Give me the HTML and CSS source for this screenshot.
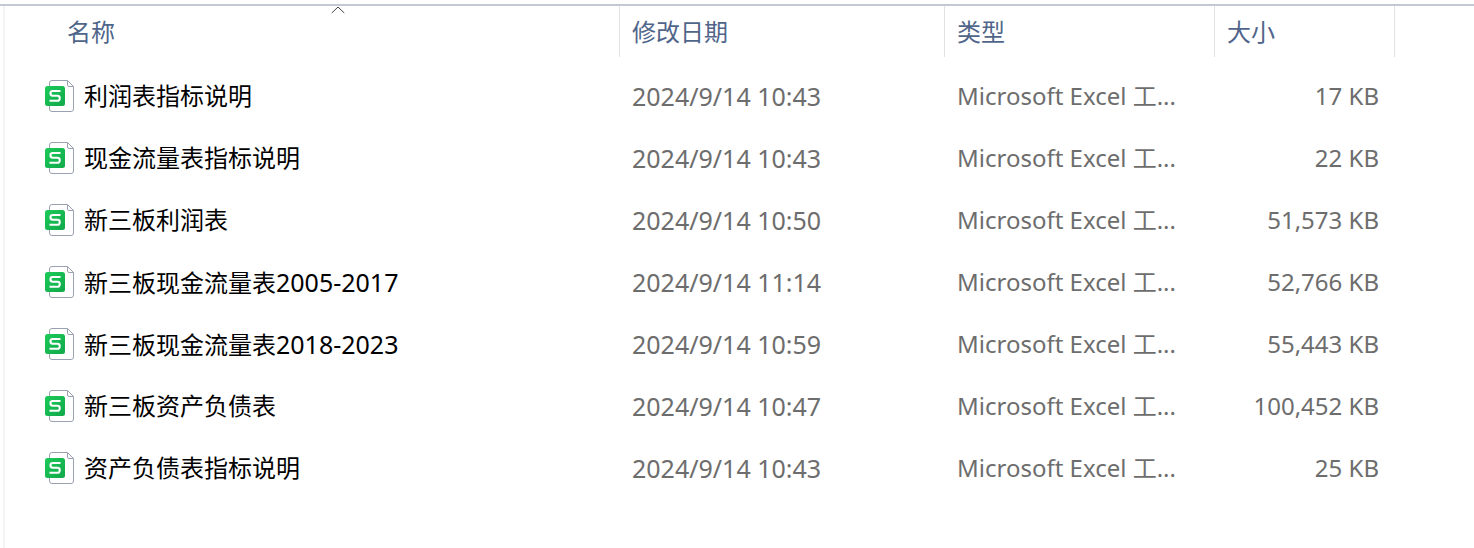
FILE: index.html
```html
<!DOCTYPE html>
<html lang="zh-CN">
<head>
  <meta charset="UTF-8">
  <title>文件列表</title>
  <link rel="stylesheet" href="styles.css">
</head>
<body>
  <!-- 文件图标 -->
  <svg class="sprite" width="0" height="0" aria-hidden="true">
    <defs>
      <linearGradient id="green" x1="0" y1="0" x2="1" y2="1">
        <stop offset="0" stop-color="#1bcb58"/>
        <stop offset="1" stop-color="#12a84b"/>
      </linearGradient>
      <symbol id="sheet" viewBox="0 0 30 32">
        <path d="M7 .5H22.500L28.500 6.500V29a2.500 2.500 0 0 1-2.500 2.500H7A2.500 2.500 0 0 1 4.500 29V3A2.500 2.500 0 0 1 7 .5Z" fill="#fff" stroke="#9aa1b0"/>
        <path d="M22.500 .5V5a1.500 1.500 0 0 0 1.500 1.500H28.500" fill="none" stroke="#9aa1b0"/>
        <rect x="0" y="6" width="20" height="20" rx="2.500" fill="url(#green)"/>
        <path d="M15.500 11H7.700a2.200 2.200 0 0 0-2.200 2.200v.4a2.200 2.200 0 0 0 2.200 2.200H12.500a2.200 2.200 0 0 1 2.200 2.200v.6a2.200 2.200 0 0 1-2.200 2.200H4.500" fill="none" stroke="#fff" stroke-width="2.100"/>
      </symbol>
    </defs>
  </svg>

  <main class="explorer">
    <table class="files">
      <colgroup>
        <col class="col-name">
        <col class="col-date">
        <col class="col-type">
        <col class="col-size">
        <col>
      </colgroup>
      <thead>
        <tr>
          <th class="name-head" aria-sort="ascending">
            <button type="button">名称
              <svg class="sort" width="14" height="8" viewBox="0 0 14 8" aria-hidden="true"><path d="M.7 7L7 1L13.300 7" fill="none" stroke="#444"/></svg>
            </button>
          </th>
          <th><button type="button">修改日期</button></th>
          <th><button type="button">类型</button></th>
          <th><button type="button">大小</button></th>
          <td></td>
        </tr>
      </thead>
      <tbody>
        <tr>
          <td class="name"><div class="file"><svg class="icon"><use href="#sheet"/></svg><span>利润表指标说明</span></div></td>
          <td class="date">2024/9/14 10:43</td>
          <td>Microsoft Excel 工...</td>
          <td class="size">17 KB</td>
          <td></td>
        </tr>
        <tr>
          <td class="name"><div class="file"><svg class="icon"><use href="#sheet"/></svg><span>现金流量表指标说明</span></div></td>
          <td class="date">2024/9/14 10:43</td>
          <td>Microsoft Excel 工...</td>
          <td class="size">22 KB</td>
          <td></td>
        </tr>
        <tr>
          <td class="name"><div class="file"><svg class="icon"><use href="#sheet"/></svg><span>新三板利润表</span></div></td>
          <td class="date">2024/9/14 10:50</td>
          <td>Microsoft Excel 工...</td>
          <td class="size">51,573 KB</td>
          <td></td>
        </tr>
        <tr>
          <td class="name"><div class="file"><svg class="icon"><use href="#sheet"/></svg><span>新三板现金流量表<span class="years">2005-2017</span></span></div></td>
          <td class="date">2024/9/14 11:14</td>
          <td>Microsoft Excel 工...</td>
          <td class="size">52,766 KB</td>
          <td></td>
        </tr>
        <tr>
          <td class="name"><div class="file"><svg class="icon"><use href="#sheet"/></svg><span>新三板现金流量表<span class="years">2018-2023</span></span></div></td>
          <td class="date">2024/9/14 10:59</td>
          <td>Microsoft Excel 工...</td>
          <td class="size">55,443 KB</td>
          <td></td>
        </tr>
        <tr>
          <td class="name"><div class="file"><svg class="icon"><use href="#sheet"/></svg><span>新三板资产负债表</span></div></td>
          <td class="date">2024/9/14 10:47</td>
          <td>Microsoft Excel 工...</td>
          <td class="size">100,452 KB</td>
          <td></td>
        </tr>
        <tr>
          <td class="name"><div class="file"><svg class="icon"><use href="#sheet"/></svg><span>资产负债表指标说明</span></div></td>
          <td class="date">2024/9/14 10:43</td>
          <td>Microsoft Excel 工...</td>
          <td class="size">25 KB</td>
          <td></td>
        </tr>
      </tbody>
    </table>
  </main>
</body>
</html>
```
FILE: styles.css
```css
* {
  box-sizing: border-box;
}

body {
  margin: 0;
  padding-top: 4px;
  background-color: #fff;
  font-family: "Noto Sans", "Noto Sans CJK SC", sans-serif;
  font-size: 24px;
  line-height: 32px;
}

.sprite {
  position: absolute;
}

.explorer {
  min-height: calc(100vh - 4px);
  border-top: 2px solid #c2c9d1;
  padding-left: 3px;
  background: linear-gradient(#f5f5f5, #f5f5f5) 3px 0 / 2px 100% no-repeat;
}

.files {
  width: 100%;
  border-collapse: collapse;
  table-layout: fixed;
}

.col-name {
  width: 617px;
}

.col-date {
  width: 325px;
}

.col-type {
  width: 270px;
}

.col-size {
  width: 180px;
}

th,
td {
  padding: 0;
  text-align: left;
  white-space: nowrap;
}

th {
  padding-bottom: 8px;
  font-weight: 400;
}

.name-head {
  padding-left: 52px;
}

th button {
  display: block;
  position: relative;
  width: 100%;
  height: 51px;
  padding: 0 12px;
  border: none;
  border-right: 1px solid #e2e2e2;
  background: none;
  color: #50658a;
  font: inherit;
  text-align: left;
  cursor: pointer;
}

.sort {
  position: absolute;
  top: 0;
  left: 50%;
  margin-left: -6px;
}

tbody td {
  height: 62px;
  padding-left: 12px;
  color: #6d6d6d;
}

tbody .name {
  padding-left: 42px;
  color: #000;
}

.file {
  display: flex;
  align-items: center;
  gap: 9px;
}

.icon {
  width: 30px;
  height: 32px;
}

.date,
.years {
  font-size: 25px;
}

tbody .size {
  padding: 0 16px 0 0;
  text-align: right;
}

tbody tr:hover {
  background-color: #e5f3ff;
}
```
